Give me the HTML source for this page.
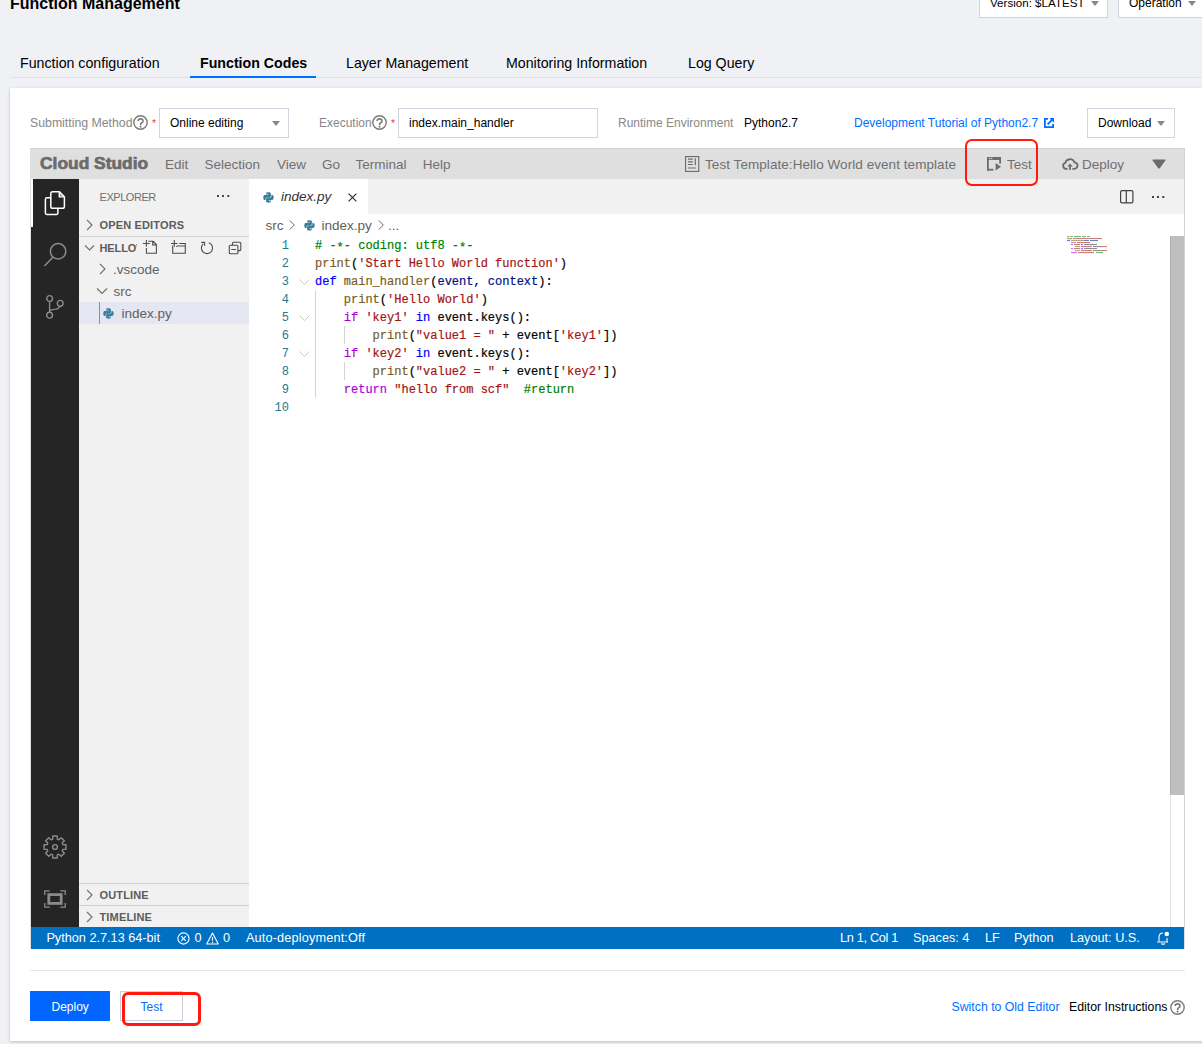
<!DOCTYPE html>
<html><head><meta charset="utf-8">
<style>
*{box-sizing:border-box;margin:0;padding:0}
html,body{width:1202px;height:1044px;overflow:hidden}
body{background:#f0f1f5;position:relative;font-family:"Liberation Sans",sans-serif;color:#000}
.a{position:absolute;white-space:pre;line-height:1}
.box{position:absolute;background:#fff;border:1px solid #cfd5de}
.tri{position:absolute;width:0;height:0;border-left:4.5px solid transparent;border-right:4.5px solid transparent;border-top:5px solid #888}
.t14{font-size:14.2px}
.t12{font-size:12px}
.mono{font-family:"Liberation Mono",monospace;font-size:12px}
svg{position:absolute;overflow:visible}
.hm{top:157.8px;font-size:13.5px;color:#707070}
.sh{font-size:11px;font-weight:700;color:#5c5c5c;letter-spacing:0.15px}
.fi{font-size:13.5px;color:#616161}
.bc{top:219px;font-size:13.5px;color:#616161}
.ln{position:absolute;left:249px;width:40px;text-align:right;font-family:"Liberation Mono",monospace;font-size:12px;line-height:12px;color:#237893;white-space:pre}
.cl{position:absolute;left:315px;font-family:"Liberation Mono",monospace;font-size:12px;line-height:12px;color:#000;white-space:pre;-webkit-text-stroke:0.2px currentColor}
.as{position:relative;top:2px}
.c{color:#008000}.f{color:#795e26}.s{color:#a31515}.k{color:#0000ff}.p{color:#001080}.r{color:#af00db}
.sb{top:932.4px;font-size:12.7px;color:#fff}

</style></head><body>

<svg width="0" height="0" style="position:absolute"><defs><symbol id="pyi" viewBox="0 0 11 11"><path d="M5.4 0.3C2.8 0.3 3 1.4 3 1.4V2.6H5.5V3H1.9S0.3 2.8 0.3 5.4 1.7 8 1.7 8H2.6V6.8S2.5 5.4 4 5.4H6.5S7.9 5.4 7.9 4V1.7S8.1 0.3 5.4 0.3ZM4 1.1A.45.45 0 1 1 4 2 .45.45 0 1 1 4 1.1Z" fill="#3b7d9c"/><path d="M5.6 10.7C8.2 10.7 8 9.6 8 9.6V8.4H5.5V8H9.1S10.7 8.2 10.7 5.6 9.3 3 9.3 3H8.4V4.2S8.5 5.6 7 5.6H4.5S3.1 5.6 3.1 7V9.3S2.9 10.7 5.6 10.7ZM7 9.9A.45.45 0 1 1 7 9 .45.45 0 1 1 7 9.9Z" fill="#3b7d9c"/></symbol><symbol id="qi" viewBox="0 0 15 15"><circle cx="7.5" cy="7.5" r="6.7" fill="none" stroke="#7a7a7a" stroke-width="1.4"/><path d="M5.1 6.1Q5.1 3.9 7.6 3.9Q10 3.9 10 5.9Q10 7.1 8.7 7.8Q7.6 8.4 7.6 9.6V10.2" fill="none" stroke="#7a7a7a" stroke-width="1.6"/><circle cx="7.6" cy="11.7" r="0.95" fill="#7a7a7a"/></symbol></defs></svg>
<!-- header -->
<div class="a" style="left:10px;top:-4.5px;font-size:16px;font-weight:700">Function Management</div>
<div class="box" style="left:979px;top:-10px;width:129px;height:28px"></div>
<div class="a" style="left:990px;top:-3px;font-size:11.6px">Version: $LATEST</div>
<div class="tri" style="left:1091px;top:1px"></div>
<div class="box" style="left:1118px;top:-10px;width:100px;height:28px"></div>
<div class="a t12" style="left:1129px;top:-3.2px">Operation</div>
<div class="tri" style="left:1188px;top:1px"></div>

<!-- tabs -->
<div style="position:absolute;left:10px;top:77px;width:1192px;height:1px;background:#dfe2e8"></div>
<div class="a t14" style="left:20px;top:56.1px">Function configuration</div>
<div class="a t14" style="left:200px;top:56.1px;font-weight:700">Function Codes</div>
<div class="a t14" style="left:346px;top:56.1px">Layer Management</div>
<div class="a t14" style="left:506px;top:56.1px">Monitoring Information</div>
<div class="a t14" style="left:688px;top:56.1px">Log Query</div>
<div style="position:absolute;left:190px;top:76px;width:126px;height:2px;background:#006eff"></div>

<!-- card -->
<div id="card" style="position:absolute;left:10px;top:88px;width:1200px;height:953px;background:#fff;box-shadow:0 1px 3px rgba(40,50,80,.26)"></div>

<!-- form row -->
<div class="a" style="left:30px;top:116.6px;color:#888;font-size:12.3px">Submitting Method</div>
<svg style="left:133px;top:115px" width="15" height="15" viewBox="0 0 15 15"><use href="#qi"/></svg>
<div class="a" style="left:152px;top:118.3px;font-size:10.5px;color:#e54545">*</div>
<div class="box" style="left:159px;top:108px;width:130px;height:30px"></div>
<div class="a t12" style="left:170px;top:116.8px">Online editing</div>
<div class="tri" style="left:272px;top:121px"></div>

<div class="a t12" style="left:319px;top:116.8px;color:#888">Execution</div>
<svg style="left:372px;top:115px" width="15" height="15" viewBox="0 0 15 15"><use href="#qi"/></svg>
<div class="a" style="left:391px;top:118.3px;font-size:10.5px;color:#e54545">*</div>
<div class="box" style="left:398px;top:108px;width:200px;height:30px"></div>
<div class="a t12" style="left:409px;top:116.8px">index.main_handler</div>

<div class="a t12" style="left:618px;top:116.8px;color:#888">Runtime Environment</div>
<div class="a t12" style="left:744px;top:116.8px">Python2.7</div>
<div class="a t12" style="left:854px;top:116.8px;color:#006eff">Development Tutorial of Python2.7</div>
<svg style="left:1044px;top:118px" width="10" height="10" viewBox="0 0 10 10"><path d="M4 0.9H0.9V9.1H9.1V6" fill="none" stroke="#006eff" stroke-width="1.8"/><path d="M5.3 0H10V4.7Z" fill="#006eff"/><path d="M3.6 6.4L7.8 2.2" stroke="#006eff" stroke-width="1.8"/></svg>
<div class="box" style="left:1087px;top:108px;width:88px;height:30px"></div>
<div class="a t12" style="left:1098px;top:116.8px">Download</div>
<div class="tri" style="left:1157px;top:121px"></div>

<!-- IDE -->
<div id="ide" style="position:absolute;left:30px;top:148px;width:1155px;height:801px;background:#dfdfdf;border-top:1px solid #d2d2d2"></div>
<!-- IDE header -->
<div class="a" style="left:40px;top:155px;font-size:17.4px;font-weight:700;color:#6b6b6b;letter-spacing:0px;-webkit-text-stroke:0.7px #6b6b6b">Cloud Studio</div>
<div class="a hm" style="left:165px">Edit</div>
<div class="a hm" style="left:204.6px">Selection</div>
<div class="a hm" style="left:277px">View</div>
<div class="a hm" style="left:322px">Go</div>
<div class="a hm" style="left:355.6px">Terminal</div>
<div class="a hm" style="left:422.7px">Help</div>
<svg style="left:685px;top:156px" width="15" height="16" viewBox="0 0 15 16"><rect x="0.55" y="0.55" width="13.2" height="14.9" fill="none" stroke="#6b6b6b" stroke-width="1.1"/><path d="M3 3.2H7.8M3 5.8H7.8M3 8.5H7.8M10.3 2.2V9.3" stroke="#6b6b6b" stroke-width="1.2"/><path d="M3 12H10.8" stroke="#8f8f8f" stroke-width="1.4"/></svg>
<div class="a hm" style="left:705px;letter-spacing:0.06px">Test Template:Hello World event template</div>
<svg style="left:987px;top:157px" width="14" height="14" viewBox="0 0 14 14"><g fill="#6b6b6b"><rect x="0" y="0" width="14" height="3"/><rect x="0" y="0" width="1.8" height="13.6"/><rect x="0" y="11.8" width="6.5" height="1.8"/><rect x="12.2" y="0" width="1.8" height="6.5"/><path d="M8.6 6L14 9.8L8.6 13.6Z"/></g><rect x="1.9" y="0.9" width="1.4" height="1.2" fill="#ddd"/><rect x="4" y="0.9" width="1.4" height="1.2" fill="#ddd"/></svg>
<div class="a hm" style="left:1007px">Test</div>
<svg style="left:1062px;top:157px" width="16" height="13" viewBox="0 0 16 13"><path d="M5.6 11.8H4A3 3 0 0 1 3.4 5.9A4.7 4.7 0 0 1 12.4 5.3A3.25 3.25 0 0 1 12.2 11.8H10.4" fill="none" stroke="#6b6b6b" stroke-width="1.8"/><path d="M8 13V9" stroke="#6b6b6b" stroke-width="1.8"/><path d="M5.2 9.6L8 6.6L10.8 9.6Z" fill="#6b6b6b"/></svg>
<div class="a hm" style="left:1082px">Deploy</div>
<svg style="left:1152px;top:159px" width="14" height="10" viewBox="0 0 14 10"><path d="M1 0.6H13Q14 0.6 13.4 1.5L7.8 9.3Q7 10.2 6.2 9.3L0.6 1.5Q0 0.6 1 0.6Z" fill="#6b6b6b"/></svg>

<!-- activity bar -->
<div style="position:absolute;left:31px;top:179px;width:48px;height:748px;background:#252526"></div>
<div style="position:absolute;left:31px;top:179px;width:2px;height:48px;background:#fff"></div>
<svg style="left:44px;top:191px" width="22" height="25" viewBox="0 0 22 25"><path d="M6.8 6.7H3.1Q1.4 6.7 1.4 8.4V21.9Q1.4 23.6 3.1 23.6H12.2Q13.9 23.6 13.9 21.9V17.5" fill="none" stroke="#fff" stroke-width="1.5"/><path d="M8.6 0.8H15.4L20.4 5.8V15.4Q20.4 17.2 18.6 17.2H8.6Q6.8 17.2 6.8 15.4V2.6Q6.8 0.8 8.6 0.8Z" fill="none" stroke="#fff" stroke-width="1.5"/><path d="M15.3 1V5.9H20.2" fill="none" stroke="#fff" stroke-width="1.4"/><path d="M15.6 1.5V5.6H19.6Z" fill="#fff" opacity="0.5"/></svg>
<svg style="left:42px;top:241px" width="26" height="28" viewBox="0 0 26 28"><circle cx="16.1" cy="10.3" r="7.7" fill="none" stroke="#8b8b8b" stroke-width="1.5"/><path d="M10.9 16.3L2.4 25" stroke="#8b8b8b" stroke-width="1.6"/></svg>
<svg style="left:45px;top:294px" width="20" height="26" viewBox="0 0 20 26"><g fill="none" stroke="#8b8b8b" stroke-width="1.4"><circle cx="4.6" cy="4.5" r="2.9"/><circle cx="15.2" cy="9.3" r="2.9"/><circle cx="4.6" cy="21.2" r="2.9"/><path d="M4.6 7.4V18.3M14.6 12.1Q13.8 14.8 11 15.1Q6.2 15.4 4.6 17"/></g></svg>
<svg style="left:43px;top:835px" width="24" height="24" viewBox="0 0 24 24"><path d="M9.66 4.14 L9.77 1.02 L14.23 1.02 L14.34 4.14 L15.90 4.79 L18.19 2.66 L21.34 5.81 L19.21 8.10 L19.86 9.66 L22.98 9.77 L22.98 14.23 L19.86 14.34 L19.21 15.90 L21.34 18.19 L18.19 21.34 L15.90 19.21 L14.34 19.86 L14.23 22.98 L9.77 22.98 L9.66 19.86 L8.10 19.21 L5.81 21.34 L2.66 18.19 L4.79 15.90 L4.14 14.34 L1.02 14.23 L1.02 9.77 L4.14 9.66 L4.79 8.10 L2.66 5.81 L5.81 2.66 L8.10 4.79Z" fill="none" stroke="#8b8b8b" stroke-width="1.4" stroke-linejoin="round"/><circle cx="12" cy="12" r="2.4" fill="none" stroke="#8b8b8b" stroke-width="1.4"/></svg>
<svg style="left:44px;top:890px" width="22" height="18" viewBox="0 0 22 18"><path d="M0.8 5V0.8H5.8M16.2 0.8H21.2V5M21.2 13V17.2H16.2M5.8 17.2H0.8V13" fill="none" stroke="#8b8b8b" stroke-width="1.3"/><rect x="4.8" y="4.6" width="12.4" height="8.8" fill="none" stroke="#8b8b8b" stroke-width="2.8"/></svg>

<!-- sidebar -->
<div style="position:absolute;left:79px;top:179px;width:170px;height:748px;background:#f1f1f1"></div>
<div class="a" style="left:99.5px;top:191.9px;font-size:11px;color:#6f6f6f;letter-spacing:-0.45px">EXPLORER</div>
<svg style="left:217px;top:195px" width="14" height="3" viewBox="0 0 14 3"><g fill="#4a4a4a"><rect x="0" y="0" width="2" height="2"/><rect x="5" y="0" width="2" height="2"/><rect x="10.3" y="0" width="2" height="2"/></g></svg>
<svg style="left:86px;top:219px" width="8" height="12" viewBox="0 0 8 12"><path d="M1 1l5 5-5 5" fill="none" stroke="#6f6f6f" stroke-width="1.1"/></svg>
<div class="a sh" style="left:99.5px;top:220.1px">OPEN EDITORS</div>
<div style="position:absolute;left:79px;top:236px;width:170px;height:1px;background:#d0d0d0"></div>
<svg style="left:84px;top:244px" width="11" height="8" viewBox="0 0 11 8"><path d="M1 1.5l4.5 4.5 4.5-4.5" fill="none" stroke="#6f6f6f" stroke-width="1.1"/></svg>
<div style="position:absolute;left:99.5px;top:240px;width:37.2px;height:16px;overflow:hidden"><div class="a sh" style="left:0;top:2.7px;letter-spacing:-0.1px">HELLOWORLD</div></div>
<svg style="left:140px;top:236px" width="50" height="22" viewBox="0 0 50 22"><g fill="none" stroke="#4e4e4e" stroke-width="1.1"><path d="M2.9 7.5H9.8M6.4 4V10.8M6.4 12V17.3H16.4V8.5L13.3 5.3H8.3M12.7 5.3V8.9H16.4"/><path d="M31 7.5H37.6M34.3 4V10.8M32.7 9.4V17.3H45.3V7.5H39.3M36.4 10.8Q36.8 10 37.6 10H45.3"/></g></svg>
<svg style="left:195px;top:236px" width="50" height="22" viewBox="0 0 50 22"><g fill="none" stroke="#4e4e4e" stroke-width="1.1"><path d="M13.8 6.7A5.6 5.6 0 1 1 8.3 7.8"/><path d="M6.2 6.4H9.6V9.8"/><rect x="34.3" y="9.2" width="8.6" height="8.5" rx="1"/><path d="M37.5 9.2V7.2Q37.5 6.2 38.5 6.2H44.8Q45.8 6.2 45.8 7.2V13.6Q45.8 14.6 44.8 14.6H42.9M36.2 13.5H41"/></g></svg>
<svg style="left:99px;top:263px" width="8" height="12" viewBox="0 0 8 12"><path d="M1 1l5 5-5 5" fill="none" stroke="#6f6f6f" stroke-width="1.1"/></svg>
<div class="a fi" style="left:113px;top:262.6px">.vscode</div>
<svg style="left:96px;top:287px" width="12" height="8" viewBox="0 0 12 8"><path d="M1 1.5l5 5 5-5" fill="none" stroke="#6f6f6f" stroke-width="1.1"/></svg>
<div class="a fi" style="left:113.5px;top:285.3px">src</div>
<div style="position:absolute;left:79px;top:302px;width:170px;height:22px;background:#e4e6f1"></div>
<div style="position:absolute;left:99px;top:302px;width:1px;height:22px;background:#909090"></div>
<svg class="py" style="left:103px;top:307.5px" width="11" height="11" viewBox="0 0 11 11"><use href="#pyi"/></svg>
<div class="a fi" style="left:121.4px;top:306.9px">index.py</div>

<div style="position:absolute;left:79px;top:883px;width:170px;height:1px;background:#cfcfcf"></div>
<svg style="left:86px;top:889px" width="8" height="12" viewBox="0 0 8 12"><path d="M1 1l5 5-5 5" fill="none" stroke="#6f6f6f" stroke-width="1.1"/></svg>
<div class="a sh" style="left:99.5px;top:889.7px">OUTLINE</div>
<div style="position:absolute;left:79px;top:905px;width:170px;height:1px;background:#cfcfcf"></div>
<svg style="left:86px;top:911px" width="8" height="12" viewBox="0 0 8 12"><path d="M1 1l5 5-5 5" fill="none" stroke="#6f6f6f" stroke-width="1.1"/></svg>
<div class="a sh" style="left:99.5px;top:911.7px">TIMELINE</div>

<!-- editor -->
<div style="position:absolute;left:249px;top:179px;width:936px;height:748px;background:#fff"></div>
<div style="position:absolute;left:249px;top:179px;width:936px;height:35px;background:#f1f1f1"></div>
<div style="position:absolute;left:249px;top:179px;width:119px;height:35px;background:#fff"></div>
<svg class="py" style="left:263px;top:192px" width="11" height="11" viewBox="0 0 11 11"><use href="#pyi"/></svg>
<div class="a" style="left:281px;top:190.4px;font-size:13.5px;font-style:italic;color:#333">index.py</div>
<svg style="left:347.5px;top:192.5px" width="9" height="9" viewBox="0 0 9 9"><path d="M0.6 0.6L8.4 8.4M8.4 0.6L0.6 8.4" stroke="#333" stroke-width="1.25"/></svg>
<svg style="left:1120px;top:190px" width="14" height="14" viewBox="0 0 14 14"><rect x="0.6" y="0.6" width="12.3" height="12.3" rx="1.4" fill="none" stroke="#424242" stroke-width="1.2"/><path d="M6.3 0.6V12.9" stroke="#424242" stroke-width="1.2"/></svg>
<svg style="left:1152px;top:196px" width="14" height="3" viewBox="0 0 14 3"><g fill="#424242"><rect x="0" y="0" width="2" height="2"/><rect x="5" y="0" width="2" height="2"/><rect x="10.3" y="0" width="2" height="2"/></g></svg>

<div class="a bc" style="left:265.5px">src</div>
<svg style="left:289px;top:220px" width="7" height="10" viewBox="0 0 7 10"><path d="M0.8 0.5L5.3 5L0.8 9.5" fill="none" stroke="#6a6a6a" stroke-width="1"/></svg>
<svg class="py" style="left:304px;top:220px" width="11" height="11" viewBox="0 0 11 11"><use href="#pyi"/></svg>
<div class="a bc" style="left:321.5px">index.py</div>
<svg style="left:377.5px;top:220px" width="7" height="10" viewBox="0 0 7 10"><path d="M0.8 0.5L5.3 5L0.8 9.5" fill="none" stroke="#6a6a6a" stroke-width="1"/></svg>
<div class="a bc" style="left:388px">...</div>

<div id="code">
<div class="ln" style="top:240.2px">1</div>
<div class="ln" style="top:258.2px">2</div>
<div class="ln" style="top:276.2px">3</div>
<div class="ln" style="top:294.2px">4</div>
<div class="ln" style="top:312.2px">5</div>
<div class="ln" style="top:330.2px">6</div>
<div class="ln" style="top:348.2px">7</div>
<div class="ln" style="top:366.2px">8</div>
<div class="ln" style="top:384.2px">9</div>
<div class="ln" style="top:402.2px">10</div>
<div class="cl" style="top:240.2px"><span class="c"># -<span class="as">*</span>- coding: utf8 -<span class="as">*</span>-</span></div>
<div class="cl" style="top:258.2px"><span class="f">print</span>(<span class="s">'Start Hello World function'</span>)</div>
<div class="cl" style="top:276.2px"><span class="k">def</span> <span class="f">main_handler</span>(<span class="p">event</span>, <span class="p">context</span>):</div>
<div class="cl" style="top:294.2px">    <span class="f">print</span>(<span class="s">'Hello World'</span>)</div>
<div class="cl" style="top:312.2px">    <span class="r">if</span> <span class="s">'key1'</span> <span class="k">in</span> event.keys():</div>
<div class="cl" style="top:330.2px">        <span class="f">print</span>(<span class="s">"value1 = "</span> + event[<span class="s">'key1'</span>])</div>
<div class="cl" style="top:348.2px">    <span class="r">if</span> <span class="s">'key2'</span> <span class="k">in</span> event.keys():</div>
<div class="cl" style="top:366.2px">        <span class="f">print</span>(<span class="s">"value2 = "</span> + event[<span class="s">'key2'</span>])</div>
<div class="cl" style="top:384.2px">    <span class="r">return</span> <span class="s">"hello from scf"</span>  <span class="c">#return</span></div>
</div>
<svg style="left:299px;top:279px" width="11" height="6" viewBox="0 0 11 6"><path d="M0.5 0.5l5 5 5-5" fill="none" stroke="#c8c8c8" stroke-width="1"/></svg>
<svg style="left:299px;top:315px" width="11" height="6" viewBox="0 0 11 6"><path d="M0.5 0.5l5 5 5-5" fill="none" stroke="#c8c8c8" stroke-width="1"/></svg>
<svg style="left:299px;top:351px" width="11" height="6" viewBox="0 0 11 6"><path d="M0.5 0.5l5 5 5-5" fill="none" stroke="#c8c8c8" stroke-width="1"/></svg>
<div style="position:absolute;left:315px;top:290px;width:1px;height:108px;background:#d3d3d3"></div>
<div style="position:absolute;left:344px;top:326px;width:1px;height:18px;background:#d3d3d3"></div>
<div style="position:absolute;left:344px;top:362px;width:1px;height:18px;background:#d3d3d3"></div>

<!-- minimap -->
<svg style="left:1067px;top:236px" width="44" height="18" viewBox="0 0 44 18">
<g stroke-width="1" opacity="0.6">
<path d="M0 0.6h2M3 0.6h3M7 0.6h7M15 0.6h4M20 0.6h3" stroke="#008000"/>
<path d="M0 2.6h5M6 2.6h28M34 2.6h1" stroke="#a31515"/><path d="M0 2.6h5" stroke="#795e26"/>
<path d="M0 4.6h3" stroke="#0000ff"/><path d="M4 4.6h13" stroke="#795e26"/><path d="M17 4.6h5M23 4.6h8" stroke="#001080"/>
<path d="M4 6.6h5" stroke="#795e26"/><path d="M10 6.6h13" stroke="#a31515"/>
<path d="M4 8.6h2" stroke="#af00db"/><path d="M7 8.6h6" stroke="#a31515"/><path d="M14 8.6h2" stroke="#0000ff"/><path d="M17 8.6h13" stroke="#333"/>
<path d="M8 10.6h5" stroke="#795e26"/><path d="M14 10.6h11" stroke="#a31515"/><path d="M26 10.6h8" stroke="#333"/><path d="M34 10.6h6" stroke="#a31515"/>
<path d="M4 12.6h2" stroke="#af00db"/><path d="M7 12.6h6" stroke="#a31515"/><path d="M14 12.6h2" stroke="#0000ff"/><path d="M17 12.6h13" stroke="#333"/>
<path d="M8 14.6h5" stroke="#795e26"/><path d="M14 14.6h11" stroke="#a31515"/><path d="M26 14.6h8" stroke="#333"/><path d="M34 14.6h6" stroke="#a31515"/>
<path d="M4 16.6h6" stroke="#af00db"/><path d="M11 16.6h16" stroke="#a31515"/><path d="M29 16.6h7" stroke="#008000"/>
</g></svg>

<!-- scrollbar -->
<div style="position:absolute;left:1170px;top:236px;width:1px;height:691px;background:#e3e3e3"></div>
<div style="position:absolute;left:1184px;top:148px;width:1px;height:779px;background:#d2d2d2"></div>
<div style="position:absolute;left:1170px;top:236px;width:14px;height:559px;background:#bfbfbf;border-left:1px solid #b0b0b0"></div>

<!-- status bar -->
<div style="position:absolute;left:31px;top:927px;width:1153px;height:22px;background:#0071c2"></div>
<div class="a sb" style="left:46.4px">Python 2.7.13 64-bit</div>
<svg style="left:177.4px;top:931.7px" width="13" height="13" viewBox="0 0 13 13"><circle cx="6.5" cy="6.5" r="5.6" fill="none" stroke="#fff" stroke-width="1.1"/><path d="M4.2 4.2l4.6 4.6M8.8 4.2l-4.6 4.6" stroke="#fff" stroke-width="1.1"/></svg>
<div class="a sb" style="left:194.6px">0</div>
<svg style="left:206px;top:931.5px" width="13" height="13" viewBox="0 0 13 13"><path d="M6.5 1L12.3 12H0.7Z" fill="none" stroke="#fff" stroke-width="1.1" stroke-linejoin="round"/><path d="M6.5 5v3.8M6.5 9.8v1.2" stroke="#fff" stroke-width="1.1"/></svg>
<div class="a sb" style="left:223px">0</div>
<div class="a sb" style="left:246px;letter-spacing:0.16px">Auto-deployment:Off</div>
<div class="a sb" style="left:840px;letter-spacing:-0.3px">Ln 1, Col 1</div>
<div class="a sb" style="left:913px">Spaces: 4</div>
<div class="a sb" style="left:985px">LF</div>
<div class="a sb" style="left:1014px">Python</div>
<div class="a sb" style="left:1070px">Layout: U.S.</div>
<svg style="left:1156px;top:930px" width="14" height="16" viewBox="0 0 14 16"><path d="M3 11.5V7Q3 3.2 7 3" fill="none" stroke="#fff" stroke-width="1.1"/><path d="M1.2 12H12M5.2 13.5Q7 15 8.8 13.5M11 8V11.5" fill="none" stroke="#fff" stroke-width="1.1"/><circle cx="10.8" cy="4" r="2.3" fill="#fff"/></svg>


<div style="position:absolute;left:965.3px;top:139.4px;width:72.5px;height:47px;border:2.9px solid #ff1a0d;border-radius:7px"></div>
<!-- bottom -->
<div style="position:absolute;left:30px;top:970px;width:1155px;height:1px;background:#e2e6ec"></div>
<div style="position:absolute;left:30px;top:991px;width:80px;height:30px;background:#0066ff"></div>
<div class="a t12" style="left:51.5px;top:1000.8px;color:#fff">Deploy</div>
<div style="position:absolute;left:120px;top:991px;width:63px;height:30px;border:1px solid #c8d0dc;background:#fff"></div>
<div class="a t12" style="left:140.5px;top:1000.8px;color:#006eff">Test</div>
<div style="position:absolute;left:122px;top:992px;width:78.7px;height:33.8px;border:3px solid #ff1a0d;border-radius:6px"></div>
<div class="a" style="left:951.5px;top:1000.6px;color:#006eff;font-size:12.3px">Switch to Old Editor</div>
<div class="a" style="left:1069px;top:1000.6px;color:#000;font-size:12.3px">Editor Instructions</div>
<svg style="left:1170px;top:1000px" width="15" height="15" viewBox="0 0 15 15"><use href="#qi"/></svg>

</body></html>
